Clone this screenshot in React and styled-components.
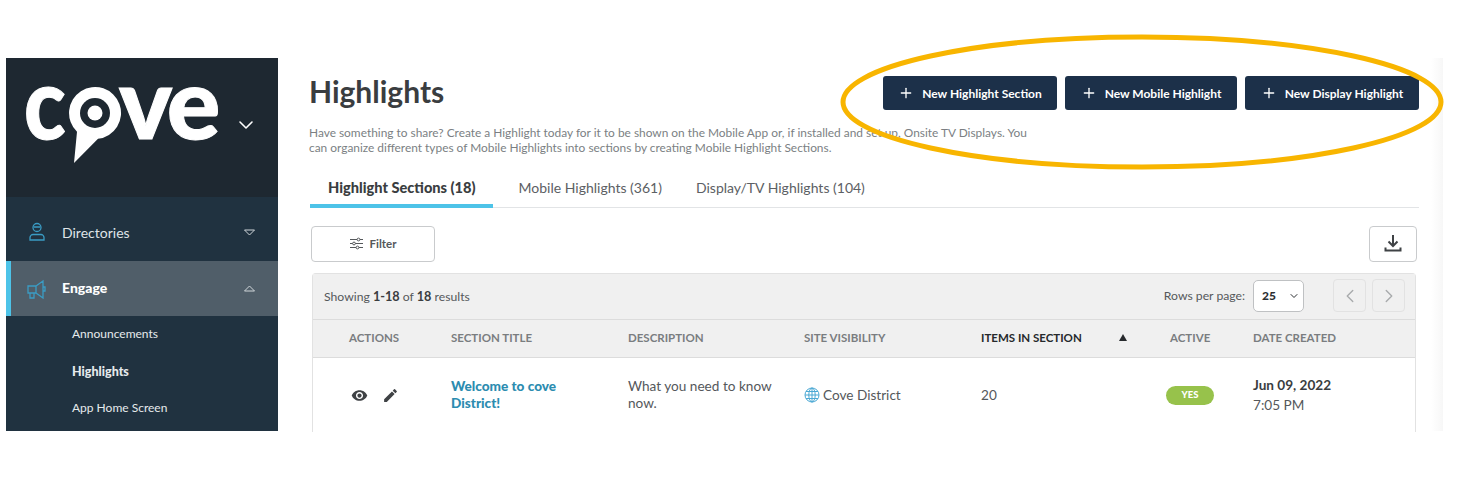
import styled, { createGlobalStyle } from "styled-components";
import { Plus, ChevronLeft, ChevronRight, ChevronDown } from "lucide-react";

const GlobalStyle = createGlobalStyle`
  html, body {
    margin: 0;
    padding: 0;
    background: #fff;
    font-family: "Lato", "Open Sans", sans-serif;
  }
  * { box-sizing: border-box; }
`;

const Page = styled.div`
  position: relative;
  width: 1457px;
  height: 483px;
  padding: 58px 14px 52px 6px;
  overflow: hidden;
  background: #fff;
`;

const Frame = styled.div`
  display: flex;
  height: 373px;
`;

const Sidebar = styled.aside`
  flex: 0 0 272px;
  background: #203240;
  color: #fff;
`;

const LogoBar = styled.div`
  display: flex;
  height: 139px;
  padding: 0 20px 0 20px;
  justify-content: space-between;
  background: #1e2831;
`;

const Logo = styled.div`
  display: flex;
  height: 80px;
  margin-top: 2px;
  align-items: flex-start;
  font-size: 100px;
  font-weight: 900;
  line-height: 80px;
  letter-spacing: -4px;
  color: #fff;
  -webkit-text-stroke: 1px #fff;
`;

const LogoC = styled.span`
  display: inline-block;
  width: 44px;
  margin-left: -2px;
  transform: scaleX(0.86);
  transform-origin: left center;
`;

const LogoCaret = styled(ChevronDown)`
  margin-top: 55px;
`;

const NavRow = styled.div`
  display: flex;
  align-items: center;
  height: ${(p) => p.$h}px;
  padding: ${(p) => (p.$active ? "0 22px 0 15px" : "6px 22px 0 20px")};
  border-left: ${(p) => (p.$active ? "5px solid #4dc3e8" : "none")};
  background: ${(p) => (p.$active ? "#505e69" : "transparent")};
  font-size: 14px;
  font-weight: ${(p) => (p.$active ? 900 : 400)};
  color: ${(p) => (p.$active ? "#fff" : "#dfe4e8")};
`;

const NavIcon = styled.svg`
  flex: 0 0 22px;
  width: 22px;
  height: 22px;
  margin-right: 14px;
  fill: none;
  stroke: #3a9cc4;
  stroke-width: 1.3;
`;

const NavLabel = styled.span`
  flex: 1;
  margin-top: ${(p) => (p.$active ? -2 : 0)}px;
`;

const SubList = styled.div`
  display: flex;
  flex-direction: column;
  padding: 0 0 0 66px;
`;

const SubItem = styled.div`
  height: 37px;
  line-height: ${(p) => (p.$bold ? 37 : 36)}px;
  font-size: ${(p) => (p.$bold ? 12.5 : 12)}px;
  font-weight: ${(p) => (p.$bold ? 900 : 400)};
  color: #e6eaed;
`;

const Main = styled.main`
  flex: 1;
  padding: 18px 24px 0 31px;
  background: linear-gradient(to right, #fff calc(100% - 12px), #f7f7f7);
`;

const HeaderRow = styled.div`
  display: flex;
  justify-content: space-between;
  height: 34px;
`;

const Title = styled.h1`
  margin: 0;
  font-size: 30px;
  font-weight: 700;
  line-height: 30px;
  color: #3a3d40;
`;

const Actions = styled.div`
  display: flex;
  gap: 8px;
`;

const NewButton = styled.button`
  display: flex;
  align-items: center;
  justify-content: center;
  gap: 8px;
  width: ${(p) => p.$w}px;
  height: 34px;
  padding: 0;
  border: none;
  border-radius: 3px;
  background: #1c3049;
  color: #fff;
  font-family: inherit;
  font-size: 12px;
  font-weight: 700;
`;

const Intro = styled.p`
  width: 725px;
  margin: 15px 0 0;
  font-size: 11.9px;
  line-height: 15px;
  color: #7b7f83;
`;

const Tabs = styled.div`
  display: flex;
  height: 34px;
  margin: 19px 0 0 1px;
  border-bottom: 1px solid #e2e4e6;
`;

const Tab = styled.div`
  height: 34px;
  padding: ${(p) => p.$pad};
  line-height: 28px;
  font-size: ${(p) => (p.$active ? 14.6 : 14)}px;
  font-weight: ${(p) => (p.$active ? 900 : 400)};
  color: ${(p) => (p.$active ? "#3a3d40" : "#5c6064")};
  border-bottom: ${(p) => (p.$active ? "4px solid #4dc3e8" : "none")};
`;

const ToolRow = styled.div`
  display: flex;
  justify-content: space-between;
  margin: 18px 2px 11px;
`;

const OutlineButton = styled.button`
  display: flex;
  align-items: center;
  justify-content: center;
  gap: 7px;
  width: ${(p) => p.$w}px;
  height: 36px;
  padding: 0 0 2px;
  border: 1px solid #c9cbcd;
  border-radius: 4px;
  background: #fff;
  color: #55585b;
  font-family: inherit;
  font-size: 11.5px;
  font-weight: 700;
`;

const Card = styled.section`
  margin: 0 3px;
  border: 1px solid #e2e2e2;
  border-bottom: none;
  border-radius: 4px 4px 0 0;
`;

const CardTop = styled.div`
  display: flex;
  align-items: center;
  justify-content: space-between;
  height: 46px;
  padding: 0 10px 2px 11px;
  background: #f0f0f0;
  border-bottom: 1px solid #dcdcdc;
  font-size: 12.2px;
  color: #55585b;
  b { color: #3a3d40; font-size: 12.7px; font-weight: 700; }
`;

const Pager = styled.div`
  display: flex;
  align-items: center;
`;

const RowsSelect = styled.div`
  display: flex;
  align-items: center;
  justify-content: space-between;
  width: 51px;
  height: 32px;
  margin: 0 29px 0 8px;
  padding: 0 3px 0 8px;
  border: 1px solid #bfc1c3;
  border-radius: 5px;
  background: #fff;
  font-size: 12px;
  font-weight: 900;
  color: #2c2f32;
`;

const PageButton = styled.div`
  display: flex;
  align-items: center;
  justify-content: center;
  width: 33px;
  height: 33px;
  margin-left: ${(p) => (p.$gap ? 6 : 0)}px;
  border: 1px solid #e2e2e2;
  border-radius: 4px;
  color: #a8aaac;
`;

const columns = "138px 177px 176px 177px 189px 83px 1fr";

const HeadRow = styled.div`
  display: grid;
  grid-template-columns: ${columns};
  align-items: center;
  height: 38px;
  padding-bottom: 3px;
  background: #f0f0f0;
  border-bottom: 1px solid #dcdcdc;
`;

const HeadCell = styled.div`
  display: flex;
  justify-content: space-between;
  align-items: center;
  padding: ${(p) => p.$pad || "0"};
  font-size: 11.5px;
  font-weight: 700;
  color: ${(p) => (p.$sorted ? "#26292c" : "#7a7d80")};
`;

const SortMark = styled.span`
  width: 0;
  height: 0;
  border-left: 4.5px solid transparent;
  border-right: 4.5px solid transparent;
  border-bottom: 7px solid #26292c;
`;

const BodyRow = styled.div`
  display: grid;
  grid-template-columns: ${columns};
  align-items: center;
  height: 74px;
  font-size: 13.6px;
  line-height: 17px;
  color: #55585b;
`;

const IconCell = styled.div`
  display: flex;
  align-items: center;
  gap: 14px;
  padding-left: 38px;
`;

const RowIcon = styled.svg`
  width: 17px;
  height: 17px;
  fill: #3f4245;
`;

const TitleLink = styled.a`
  width: 125px;
  font-weight: 900;
  color: #2c8cb0;
`;

const Wrap = styled.div`
  width: 150px;
`;

const Visibility = styled.div`
  display: flex;
  align-items: center;
  gap: 3px;
`;

const Badge = styled.span`
  display: block;
  width: 48px;
  height: 19px;
  margin-left: -4px;
  border-radius: 10px;
  background: #97c24b;
  color: #fff;
  font-size: 9.5px;
  font-weight: 900;
  line-height: 17px;
  text-align: center;
`;

const DateCell = styled.div`
  line-height: 20px;
  b { display: block; font-weight: 700; color: #3a3d40; }
`;

const Halo = styled.svg`
  position: absolute;
  left: 830px;
  top: 25px;
  width: 627px;
  height: 150px;
  pointer-events: none;
`;

const Triangle = ({ up }) => (
  <svg width="13" height="7" viewBox="0 0 13 7" fill="none" stroke="#cfd5d9" strokeWidth="1">
    <path d={up ? "M6.500 1 1.500 6h10Z" : "M6.500 6 1.500 1h10Z"} />
  </svg>
);

const Globe = () => (
  <svg width="16" height="16" viewBox="0 0 16 16" fill="none" stroke="#4aa8d4" strokeWidth="1">
    <circle cx="8" cy="8" r="7" />
    <ellipse cx="8" cy="8" rx="3.2" ry="7" />
    <path d="M8 1v14M1 8h14M2 4.500h12M2 11.500h12" />
  </svg>
);

const FilterGlyph = () => (
  <svg width="13" height="13" viewBox="0 0 13 13" fill="#fff" stroke="#55585b" strokeWidth="1">
    <path d="M0 2.500h13M0 6.500h13M0 10.500h13" />
    <circle cx="8.500" cy="2.500" r="1.400" />
    <circle cx="4" cy="6.500" r="1.400" />
    <circle cx="7.500" cy="10.500" r="1.400" />
  </svg>
);

const DownloadGlyph = () => (
  <svg width="18" height="18" viewBox="0 0 18 18" fill="none" stroke="#3f4245" strokeWidth="2">
    <path d="M9 1v10.500M4.500 7.500 9 12l4.500-4.500M1.500 13.500V16.500h15V13.500" />
  </svg>
);

// the "o" of the logo is a speech-bubble pin, the other letters stay text
const Pin = () => (
  <svg width="54" height="80" viewBox="0 0 54 80" style={{ marginTop: 26, marginRight: -3 }}>
    <path fill="#fff" d="M9 45.700A26 26 0 1 1 30 52.800L6 77Z" />
    <circle cx="27" cy="27" r="15" fill="#1e2831" />
    <circle cx="27" cy="27" r="7.500" fill="#fff" />
  </svg>
);

const App = () => {
  return (
    <Page>
      <GlobalStyle />
      <Frame>
        <Sidebar>
          <LogoBar>
            <Logo>
              <LogoC>c</LogoC><Pin />ve
            </Logo>
            <LogoCaret size={24} color="#fff" strokeWidth={1.6} />
          </LogoBar>
          <NavRow $h={64}>
            <NavIcon viewBox="0 0 22 22">
              <circle cx="11" cy="6.500" r="4" />
              <path d="M8 6h6M4 19v-2.500c0-1.500 1.500-3 3-3h8c1.500 0 3 1.500 3 3V19Z" />
            </NavIcon>
            <NavLabel>Directories</NavLabel>
            <Triangle />
          </NavRow>
          <NavRow $h={55} $active>
            <NavIcon viewBox="0 0 22 22">
              <path d="M2 8h8v7H2ZM10 8l7-5v17l-7-5M17 9h2v4h-2M4 15v5h4v-5" />
            </NavIcon>
            <NavLabel $active>Engage</NavLabel>
            <Triangle up />
          </NavRow>
          <SubList>
            <SubItem>Announcements</SubItem>
            <SubItem $bold>Highlights</SubItem>
            <SubItem>App Home Screen</SubItem>
          </SubList>
        </Sidebar>
        <Main>
          <HeaderRow>
            <Title>Highlights</Title>
            <Actions>
              <NewButton $w={174}><Plus size={16} />New Highlight Section</NewButton>
              <NewButton $w={172}><Plus size={16} />New Mobile Highlight</NewButton>
              <NewButton $w={174}><Plus size={16} />New Display Highlight</NewButton>
            </Actions>
          </HeaderRow>
          <Intro>
            Have something to share? Create a Highlight today for it to be shown on the Mobile App or, if installed and set up, Onsite TV Displays. You can organize different types of Mobile Highlights into sections by creating Mobile Highlight Sections.
          </Intro>
          <Tabs>
            <Tab $active $pad="0 17px 0 18px">Highlight Sections (18)</Tab>
            <Tab $pad="0 0 0 26px">Mobile Highlights (361)</Tab>
            <Tab $pad="0 0 0 34px">Display/TV Highlights (104)</Tab>
          </Tabs>
          <ToolRow>
            <OutlineButton $w={124}><FilterGlyph />Filter</OutlineButton>
            <OutlineButton $w={48}><DownloadGlyph /></OutlineButton>
          </ToolRow>
          <Card>
            <CardTop>
              <span>Showing <b>1-18</b> of <b>18</b> results</span>
              <Pager>
                Rows per page:
                <RowsSelect>25<ChevronDown size={12} /></RowsSelect>
                <PageButton><ChevronLeft size={22} strokeWidth={1.5} /></PageButton>
                <PageButton $gap><ChevronRight size={22} strokeWidth={1.5} /></PageButton>
              </Pager>
            </CardTop>
            <HeadRow>
              <HeadCell $pad="0 0 0 36px">ACTIONS</HeadCell>
              <HeadCell>SECTION TITLE</HeadCell>
              <HeadCell>DESCRIPTION</HeadCell>
              <HeadCell>SITE VISIBILITY</HeadCell>
              <HeadCell $sorted $pad="0 43px 0 0">ITEMS IN SECTION<SortMark /></HeadCell>
              <HeadCell>ACTIVE</HeadCell>
              <HeadCell>DATE CREATED</HeadCell>
            </HeadRow>
            <BodyRow>
              <IconCell>
                <RowIcon viewBox="0 0 24 24">
                  <path d="M12 4.500C7 4.500 2.730 7.610 1 12c1.730 4.390 6 7.500 11 7.500s9.270-3.110 11-7.500c-1.730-4.390-6-7.500-11-7.500zM12 17c-2.760 0-5-2.240-5-5s2.240-5 5-5 5 2.240 5 5-2.240 5-5 5zm0-8c-1.660 0-3 1.340-3 3s1.340 3 3 3 3-1.340 3-3-1.340-3-3-3z" />
                </RowIcon>
                <RowIcon viewBox="0 0 24 24">
                  <path d="M3 17.250V21h3.750L17.810 9.940l-3.750-3.750L3 17.250zM20.710 7.040a1 1 0 0 0 0-1.410l-2.340-2.340a1 1 0 0 0-1.410 0l-1.830 1.830 3.750 3.750 1.830-1.830z" />
                </RowIcon>
              </IconCell>
              <TitleLink>Welcome to cove District!</TitleLink>
              <Wrap>What you need to know now.</Wrap>
              <Visibility><Globe />Cove District</Visibility>
              <div>20</div>
              <div><Badge>YES</Badge></div>
              <DateCell><b>Jun 09, 2022</b>7:05 PM</DateCell>
            </BodyRow>
          </Card>
        </Main>
      </Frame>
      <Halo viewBox="0 0 627 150">
        <ellipse cx="312" cy="77" rx="299" ry="65" fill="none" stroke="#f8b500" strokeWidth="5" />
      </Halo>
    </Page>
  );
};

export default App;
